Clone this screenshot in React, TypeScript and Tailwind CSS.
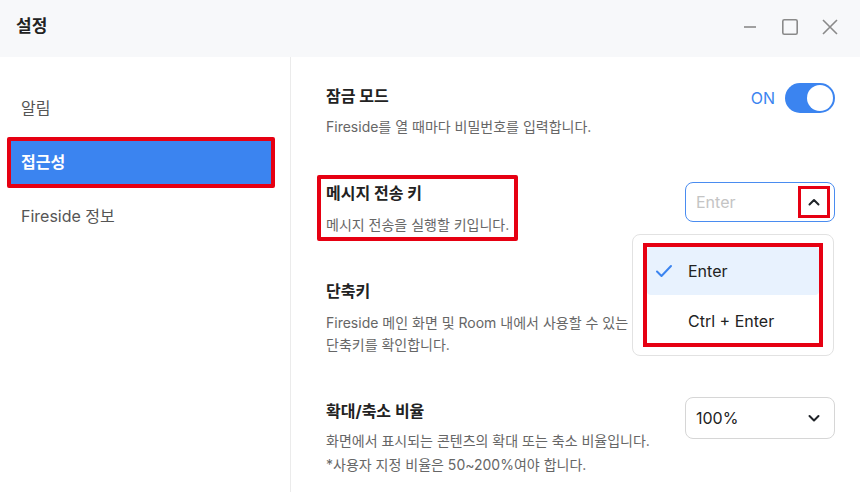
import React from "react";

const font = { fontFamily: 'Inter, "Noto Sans CJK KR", "Noto Sans", sans-serif' };

function Chevron({ up }: { up?: boolean }) {
  return (
    <svg width="14" height="14" viewBox="0 0 14 14" fill="none">
      <path
        d={up ? "M2.5 9.5 L7 5 L11.5 9.5" : "M2.5 5 L7 9.5 L11.5 5"}
        stroke="#1f2328"
        strokeWidth="2"
        strokeLinecap="round"
        strokeLinejoin="round"
      />
    </svg>
  );
}

export default function App() {
  return (
    <div className="w-[860px] h-[492px] bg-white flex flex-col overflow-hidden" style={font}>
      {/* title bar */}
      <div className="h-[57px] bg-[#f7f8fa] flex items-center justify-between pl-[16px] pr-[22px] shrink-0">
        <div className="text-[17px] font-bold text-[#222] mt-[-3px]">설정</div>
        <div className="flex items-center mt-[-3px]">
          <svg width="12" height="16" viewBox="0 0 12 16" fill="none">
            <path d="M0 8 H12" stroke="#8a8a8a" strokeWidth="1.6" />
          </svg>
          <svg width="16" height="16" viewBox="0 0 16 16" fill="none" className="ml-[26px]">
            <rect x="0.8" y="0.8" width="14.4" height="14.4" rx="1.5" stroke="#8a8a8a" strokeWidth="1.6" />
          </svg>
          <svg width="16" height="16" viewBox="0 0 16 16" fill="none" className="ml-[24px]">
            <path d="M1 1 L15 15 M15 1 L1 15" stroke="#8a8a8a" strokeWidth="1.6" />
          </svg>
        </div>
      </div>

      <div className="flex flex-1">
        {/* sidebar */}
        <div className="w-[291px] shrink-0 border-r border-[#ebebeb] pt-[24px] flex flex-col">
          <div className="h-[54px] flex items-center pl-[21px] text-[16px] text-[#555]">알림</div>
          <div className="h-[54px] flex items-center">
            <div className="ml-[7px] w-[268px] h-[51px] border-[4px] border-[#e60012] rounded-[2px] bg-[#3b84f0] flex items-center pl-[10px] text-[16px] font-bold text-white">
              접근성
            </div>
          </div>
          <div className="h-[54px] flex items-center pl-[21px] text-[16px] text-[#555]">Fireside 정보</div>
        </div>

        {/* content */}
        <div className="flex-1 pl-[35px] pr-[25px] pt-[27px] flex flex-col">
          {/* 잠금 모드 */}
          <div className="flex justify-between">
            <div className="flex flex-col">
              <div className="text-[16px] leading-[24px] font-bold text-[#222]">잠금 모드</div>
              <div className="mt-[8px] text-[14px] leading-[22px] text-[#666]">
                Fireside를 열 때마다 비밀번호를 입력합니다.
              </div>
            </div>
            <div className="flex items-center gap-[10px] h-[30px] mt-[-1px]">
              <span className="text-[16px] text-[#3b84f0]">ON</span>
              <div className="w-[50px] h-[30px] rounded-full bg-[#3b84f0] flex items-center justify-end pr-[2px]">
                <div className="w-[26px] h-[26px] rounded-full bg-white" />
              </div>
            </div>
          </div>

          {/* 메시지 전송 키 */}
          <div className="flex justify-between mt-[37px]">
            <div className="ml-[-9px] border-[4px] border-[#e60012] rounded-[2px] pl-[5px] pr-[5px] pt-[2px] pb-[1px] flex flex-col">
              <div className="text-[16px] leading-[24px] font-bold text-[#222]">메시지 전송 키</div>
              <div className="mt-[9px] text-[14px] leading-[22px] text-[#666]">메시지 전송을 실행할 키입니다.</div>
            </div>
            <div className="relative mt-[7px]">
              <div className="w-[150px] h-[40px] rounded-[8px] border border-[#4a8cf0] flex items-center justify-between pl-[10px] pr-[4px]">
                <span className="text-[16px] text-[#c4c4c4]">Enter</span>
                <div className="w-[32px] h-[32px] border-[3px] border-[#e60012] flex items-center justify-center">
                  <Chevron up />
                </div>
              </div>
              <div className="absolute right-[1px] top-[52px] w-[202px] rounded-[8px] border border-[#e2e2e2] bg-white pt-[8px] pb-[8px] px-[10px] z-10">
                <div className="border-[4px] border-[#e60012] flex flex-col">
                  <div className="h-[48px] bg-[#e8f2fe] rounded-[4px] flex items-center pl-[8px]">
                    <svg width="18" height="14" viewBox="0 0 18 14" fill="none">
                      <path d="M2 7.5 L6.5 12 L16 2" stroke="#3b84f0" strokeWidth="2" strokeLinecap="round" strokeLinejoin="round" />
                    </svg>
                    <span className="ml-[15px] text-[16px] text-[#222]">Enter</span>
                  </div>
                  <div className="h-[48px] flex items-center pl-[41px] pt-[3px] text-[16px] text-[#222]">Ctrl + Enter</div>
                </div>
              </div>
            </div>
          </div>

          {/* 단축키 */}
          <div className="mt-[38px] flex flex-col">
            <div className="text-[16px] leading-[24px] font-bold text-[#222]">단축키</div>
            <div className="mt-[9px] text-[14px] leading-[22px] text-[#666]">
              Fireside 메인 화면 및 Room 내에서 사용할 수 있는
              <br />
              단축키를 확인합니다.
            </div>
          </div>

          {/* 확대/축소 비율 */}
          <div className="flex justify-between mt-[43px]">
            <div className="flex flex-col">
              <div className="text-[16px] leading-[24px] font-bold text-[#222]">확대/축소 비율</div>
              <div className="mt-[6px] text-[14px] leading-[24px] text-[#666]">
                화면에서 표시되는 콘텐츠의 확대 또는 축소 비율입니다.
                <br />
                *사용자 지정 비율은 50~200%여야 합니다.
              </div>
            </div>
            <div className="mt-[-2px] w-[150px] h-[42px] rounded-[8px] border border-[#d6d6d6] flex items-center justify-between pl-[10px] pr-[13px]">
              <span className="text-[16px] text-[#222]">100%</span>
              <Chevron />
            </div>
          </div>
        </div>
      </div>
    </div>
  );
}
